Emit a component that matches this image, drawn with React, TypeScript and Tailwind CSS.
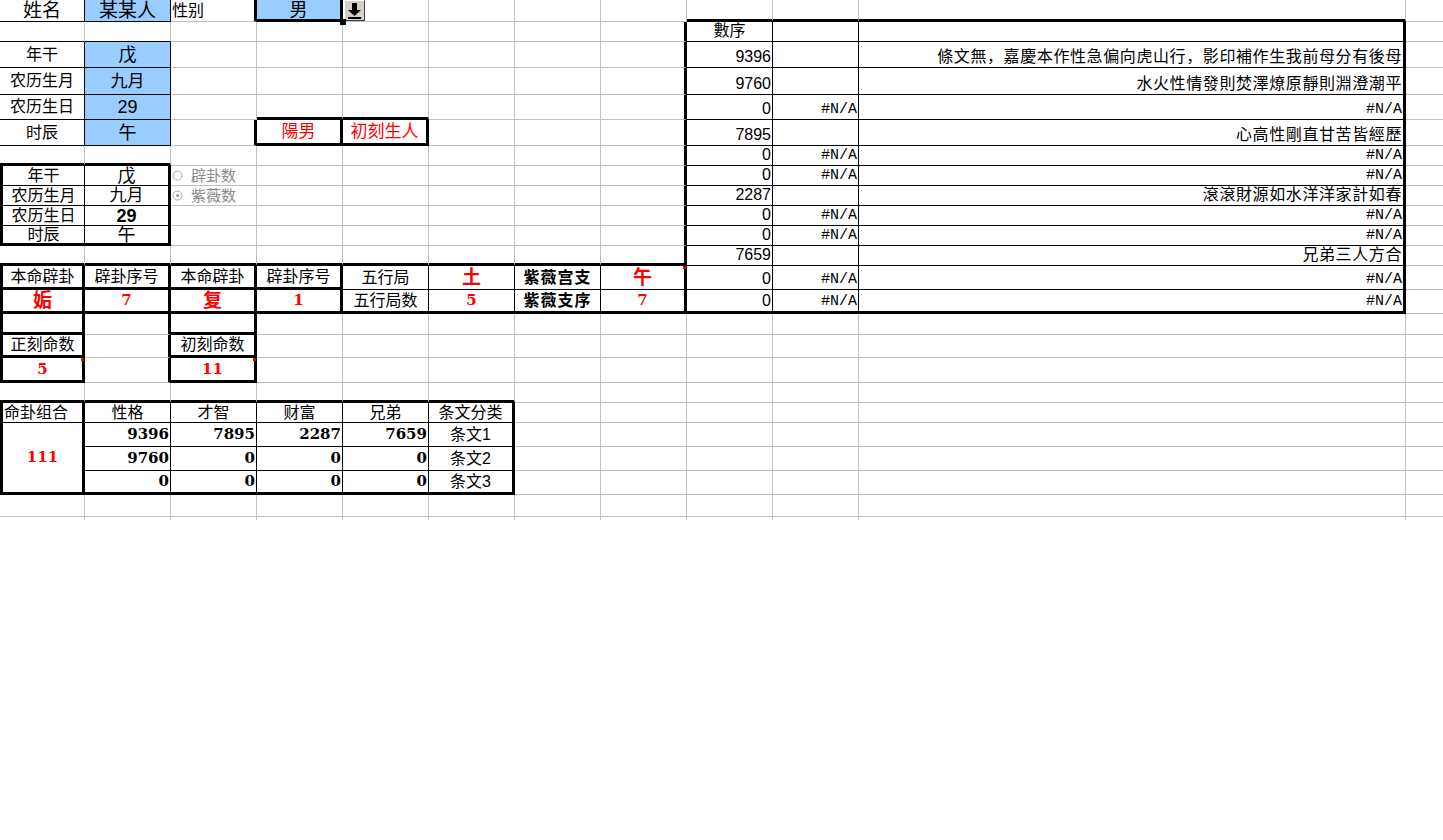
import React from 'react';

type S = 0 | 1 | 2 | 3;
const NR = 24;
const NC = 12;

const V: S[][] = Array.from({ length: NR }, () => Array(NC).fill(1) as S[]);
const H: S[][] = Array.from({ length: NR }, () => Array(NC).fill(1) as S[]);
const L: S[] = Array(NR).fill(0) as S[];

function setV(r0: number, r1: number, cs: number[], s: S) {
  for (let r = r0; r <= r1; r++) for (const c of cs) V[r][c] = s;
}
function setH(rs: number[], c0: number, c1: number, s: S) {
  for (const r of rs) for (let c = c0; c <= c1; c++) H[r][c] = s;
}
function setL(r0: number, r1: number, s: S) {
  for (let r = r0; r <= r1; r++) L[r] = s;
}

// row 0
setV(0, 0, [0, 1], 2);
setV(0, 0, [2, 3], 3);
setH([0], 0, 1, 2);
setH([0], 3, 3, 3);
setH([0], 8, 10, 3);
// right table
setV(1, 13, [7], 3);
setV(1, 13, [8, 9], 2);
setV(1, 13, [10], 3);
setH([1, 2, 3, 4, 5, 6, 7, 8, 9, 10, 11, 12], 8, 10, 2);
setH([13], 8, 10, 3);
// box 1
setH([1], 0, 1, 2);
setV(2, 5, [0, 1], 2);
setH([2, 3, 4, 5], 0, 1, 2);
// 陽男 / 初刻生人
setH([4], 3, 4, 3);
setV(5, 5, [2, 3, 4], 3);
setH([5], 3, 4, 3);
// box 2
setH([6], 0, 1, 3);
setL(7, 10, 3);
setV(7, 10, [0], 2);
setV(7, 10, [1], 3);
setH([7, 8, 9], 0, 1, 2);
setH([10], 0, 1, 3);
// middle band
setH([11], 0, 7, 3);
setL(12, 13, 3);
setV(12, 13, [0, 1, 2, 3], 3);
setV(12, 13, [4, 5, 6], 2);
setV(12, 13, [7], 3);
setH([12], 0, 3, 3);
setH([12], 4, 7, 2);
setH([13], 0, 7, 3);
// rows 14-16 boxes
setL(14, 16, 3);
setV(14, 16, [0, 1, 2], 3);
setH([14, 15, 16], 0, 0, 3);
setH([14, 15, 16], 2, 2, 3);
// bottom table
setH([17], 0, 5, 3);
setL(18, 21, 3);
setV(18, 21, [0], 3);
setV(18, 21, [1, 2, 3, 4], 2);
setV(18, 21, [5], 3);
setH([18], 0, 5, 2);
setH([19, 20], 1, 5, 2);
setH([21], 0, 5, 3);
// last row / last col
setH([23], 0, 11, 0);
setV(0, 23, [11], 0);

const rightCls: Record<S, string> = {
  0: '',
  1: 'border-r border-r-[#c0c0c0]',
  2: 'border-r border-r-black',
  3: 'border-r-[3px] border-r-black',
};
const bottomCls: Record<S, string> = {
  0: '',
  1: 'border-b border-b-[#c0c0c0]',
  2: 'border-b border-b-black',
  3: 'border-b-[3px] border-b-black',
};
const leftCls: Record<S, string> = {
  0: '',
  1: 'border-l border-l-[#c0c0c0]',
  2: 'border-l border-l-black',
  3: 'border-l-[3px] border-l-black',
};

type Cell = {
  t: React.ReactNode;
  a?: 'l' | 'c' | 'r';
  k?: string;
  bg?: string;
  vb?: boolean;
  dot?: boolean;
  handle?: boolean;
};

const blue = 'bg-[#99ccff]';
const redNum = "text-[#ff0000] font-bold font-['DejaVu_Serif',serif] text-[15px]";
const redCjk = 'text-[#ff0000] font-bold text-[19px]';
const numB = "font-bold font-['DejaVu_Serif',serif] text-[15px]";
const mono = "font-['Liberation_Mono',monospace] text-[15px]";

function DropBtn() {
  return (
    <div className="w-[21px] h-[21px] bg-[#d4d0c8] border border-t-white border-l-white border-r-[#404040] border-b-[#404040] flex items-center justify-center">
      <svg width="15" height="17" viewBox="0 0 15 17">
        <rect x="5" y="1" width="5" height="7" fill="black" />
        <polygon points="1,8 14,8 7.5,14" fill="black" />
        <rect x="1" y="15" width="13" height="2" fill="black" />
      </svg>
    </div>
  );
}

function Radio({ label, on }: { label: string; on?: boolean }) {
  return (
    <div className="flex items-center gap-[8px] text-[#8a8a8a] text-[15px]">
      <svg width="11" height="11" viewBox="0 0 11 11">
        <circle cx="5.5" cy="5.5" r="4.5" fill="white" stroke="#a8a8a8" strokeWidth="1" />
        {on && <circle cx="5.5" cy="5.5" r="1.6" fill="#9a9a9a" />}
      </svg>
      <span>{label}</span>
    </div>
  );
}

const CONTENT: Record<string, Cell> = {
  '0,0': { t: '姓名', k: 'text-[19px]' },
  '0,1': { t: '某某人', k: 'text-[19px]', bg: blue },
  '0,2': { t: '性别', a: 'l' },
  '0,3': { t: '男', k: 'text-[18px]', bg: blue, handle: true },
  '0,4': { t: <DropBtn />, a: 'l' },

  '2,0': { t: '年干' },
  '2,1': { t: '戊', k: 'text-[18px]', bg: blue },
  '3,0': { t: '农历生月' },
  '3,1': { t: '九月', k: 'text-[17px]', bg: blue },
  '4,0': { t: '农历生日' },
  '4,1': { t: '29', k: 'text-[18px]', bg: blue },
  '5,0': { t: '时辰' },
  '5,1': { t: '午', k: 'text-[18px]', bg: blue },
  '5,3': { t: '陽男', k: 'text-[17px] text-[#ff0000]' },
  '5,4': { t: '初刻生人', k: 'text-[17px] text-[#ff0000]' },

  '7,0': { t: '年干' },
  '7,1': { t: '戊', k: 'text-[18px]' },
  '7,2': { t: <Radio label="辟卦数" />, a: 'l' },
  '8,0': { t: '农历生月' },
  '8,1': { t: '九月', k: 'text-[17px]' },
  '8,2': { t: <Radio label="紫薇数" on />, a: 'l' },
  '9,0': { t: '农历生日' },
  '9,1': { t: '29', k: 'text-[18px] font-bold' },
  '10,0': { t: '时辰' },
  '10,1': { t: '午', k: 'text-[18px]' },

  '12,0': { t: '本命辟卦' },
  '12,1': { t: '辟卦序号' },
  '12,2': { t: '本命辟卦' },
  '12,3': { t: '辟卦序号' },
  '12,4': { t: '五行局' },
  '12,5': { t: '土', k: redCjk },
  '12,6': { t: '紫薇宫支', k: 'font-bold tracking-[1px]' },
  '12,7': { t: '午', k: redCjk, dot: true },
  '13,0': { t: '姤', k: redCjk },
  '13,1': { t: '7', k: redNum },
  '13,2': { t: '复', k: redCjk },
  '13,3': { t: '1', k: redNum },
  '13,4': { t: '五行局数' },
  '13,5': { t: '5', k: redNum },
  '13,6': { t: '紫薇支序', k: 'font-bold tracking-[1px]' },
  '13,7': { t: '7', k: redNum },

  '15,0': { t: '正刻命数' },
  '15,2': { t: '初刻命数' },
  '16,0': { t: '5', k: redNum, dot: true },
  '16,2': { t: '11', k: redNum, dot: true },

  '18,0': { t: '命卦组合', a: 'l' },
  '18,1': { t: '性格' },
  '18,2': { t: '才智' },
  '18,3': { t: '财富' },
  '18,4': { t: '兄弟' },
  '18,5': { t: '条文分类' },
  '19,0': { t: '111', k: redNum },
  '19,1': { t: '9396', a: 'r', k: numB },
  '19,2': { t: '7895', a: 'r', k: numB },
  '19,3': { t: '2287', a: 'r', k: numB },
  '19,4': { t: '7659', a: 'r', k: numB },
  '19,5': { t: '条文1' },
  '20,1': { t: '9760', a: 'r', k: numB },
  '20,2': { t: '0', a: 'r', k: numB },
  '20,3': { t: '0', a: 'r', k: numB },
  '20,4': { t: '0', a: 'r', k: numB },
  '20,5': { t: '条文2' },
  '21,1': { t: '0', a: 'r', k: numB },
  '21,2': { t: '0', a: 'r', k: numB },
  '21,3': { t: '0', a: 'r', k: numB },
  '21,4': { t: '0', a: 'r', k: numB },
  '21,5': { t: '条文3' },
};

const RIGHT: [string, string, string][] = [
  ['數序', '', ''],
  ['9396', '', '條文無，嘉慶本作性急偏向虎山行，影印補作生我前母分有後母'],
  ['9760', '', '水火性情發則焚澤燎原靜則淵澄潮平'],
  ['0', '#N/A', '#N/A'],
  ['7895', '', '心高性剛直甘苦皆經歷'],
  ['0', '#N/A', '#N/A'],
  ['0', '#N/A', '#N/A'],
  ['2287', '', '滾滾財源如水洋洋家計如春'],
  ['0', '#N/A', '#N/A'],
  ['0', '#N/A', '#N/A'],
  ['7659', '', '兄弟三人方合'],
  ['0', '#N/A', '#N/A'],
  ['0', '#N/A', '#N/A'],
];

RIGHT.forEach((row, i) => {
  const r = i + 1;
  CONTENT[`${r},8`] = { t: row[0], a: i === 0 ? 'c' : 'r', vb: true };
  if (row[1]) CONTENT[`${r},9`] = { t: row[1], a: 'r', vb: true, k: mono };
  if (row[2])
    CONTENT[`${r},10`] = {
      t: row[2],
      a: 'r',
      vb: true,
      k: row[2] === '#N/A' ? mono : 'tracking-[0.6px]',
    };
});

const alignCls = {
  l: 'justify-start pl-[1px]',
  c: 'justify-center',
  r: 'justify-end pr-[1px]',
};

export default function App() {
  const cells: React.ReactNode[] = [];
  for (let r = 0; r < NR; r++) {
    for (let c = 0; c < NC; c++) {
      if ((r === 20 || r === 21) && c === 0) continue;
      const merged = r === 19 && c === 0;
      const info = CONTENT[`${r},${c}`];
      const bottom = merged ? H[21][0] : H[r][c];
      const cls = [
        'relative flex min-w-0 whitespace-nowrap leading-none',
        merged ? 'row-span-3' : '',
        info?.vb ? 'items-end pb-[2px]' : 'items-center',
        alignCls[info?.a ?? 'c'],
        rightCls[V[r][c]],
        bottomCls[bottom],
        c === 0 ? leftCls[L[r]] : '',
        info?.bg ?? '',
        info?.k ?? '',
      ].join(' ');
      cells.push(
        <div key={`${r}-${c}`} className={cls}>
          {info?.t}
          {info?.dot && (
            <span className="absolute top-0 right-[-2px] w-[3px] h-[3px] bg-[#e00000]" />
          )}
          {info?.handle && (
            <span className="absolute bottom-[-6px] right-[-6px] w-[6px] h-[6px] bg-black z-10" />
          )}
        </div>
      );
    }
  }

  return (
    <div className="w-[1443px] h-[840px] bg-white overflow-hidden text-black text-[16px] font-['Liberation_Sans','Noto_Sans_CJK_SC',sans-serif]">
      <div className="grid grid-cols-[85px_86px_86px_86px_86px_86px_86px_86px_86px_86px_547px_37px] grid-rows-[22px_20px_26px_27px_25px_26px_20px_20px_20px_20px_20px_20px_24px_24px_21px_23px_25px_20px_20px_24px_24px_24px_22px_3px]">
        {cells}
      </div>
    </div>
  );
}
